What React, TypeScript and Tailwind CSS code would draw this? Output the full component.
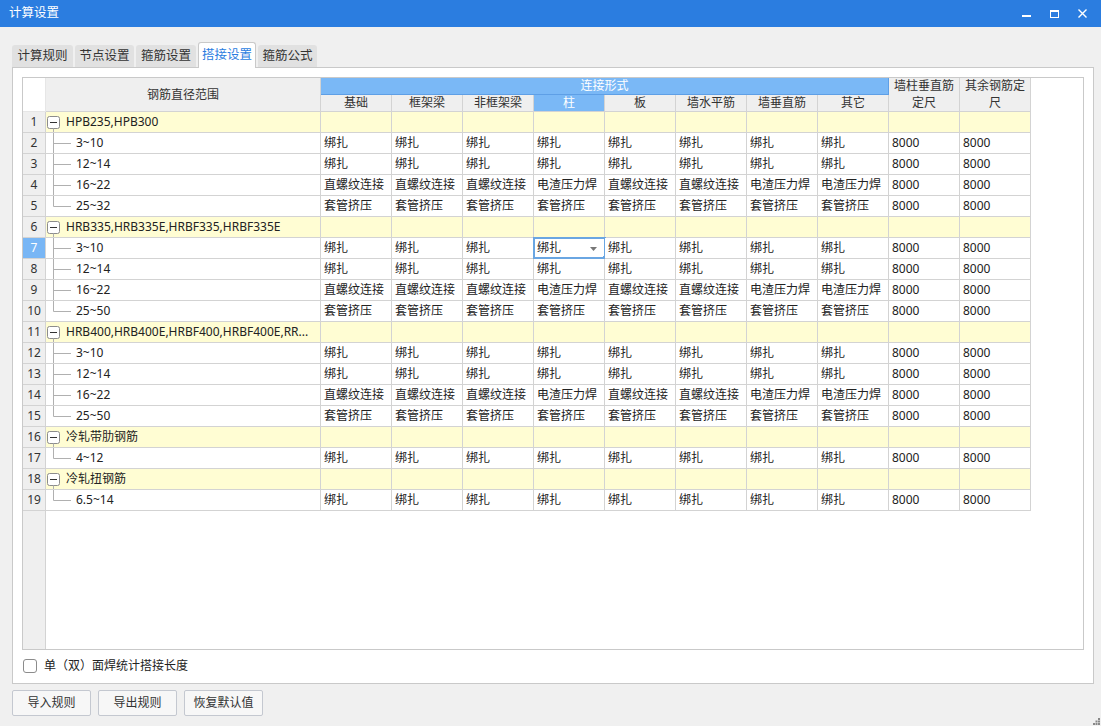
import React from "react";

const COLS = ["基础", "框架梁", "非框架梁", "柱", "板", "墙水平筋", "墙垂直筋", "其它"];

const BIND = ["绑扎", "绑扎", "绑扎", "绑扎", "绑扎", "绑扎", "绑扎", "绑扎"];
const SCREW = ["直螺纹连接", "直螺纹连接", "直螺纹连接", "电渣压力焊", "直螺纹连接", "直螺纹连接", "电渣压力焊", "电渣压力焊"];
const SLEEVE = ["套管挤压", "套管挤压", "套管挤压", "套管挤压", "套管挤压", "套管挤压", "套管挤压", "套管挤压"];

type RowDef =
  | { kind: "group"; label: string }
  | { kind: "child"; label: string; values: string[]; last?: boolean };

const ROWS: RowDef[] = [
  { kind: "group", label: "HPB235,HPB300" },
  { kind: "child", label: "3~10", values: BIND },
  { kind: "child", label: "12~14", values: BIND },
  { kind: "child", label: "16~22", values: SCREW },
  { kind: "child", label: "25~32", values: SLEEVE, last: true },
  { kind: "group", label: "HRB335,HRB335E,HRBF335,HRBF335E" },
  { kind: "child", label: "3~10", values: BIND },
  { kind: "child", label: "12~14", values: BIND },
  { kind: "child", label: "16~22", values: SCREW },
  { kind: "child", label: "25~50", values: SLEEVE, last: true },
  { kind: "group", label: "HRB400,HRB400E,HRBF400,HRBF400E,RR..." },
  { kind: "child", label: "3~10", values: BIND },
  { kind: "child", label: "12~14", values: BIND },
  { kind: "child", label: "16~22", values: SCREW },
  { kind: "child", label: "25~50", values: SLEEVE, last: true },
  { kind: "group", label: "冷轧带肋钢筋" },
  { kind: "child", label: "4~12", values: BIND, last: true },
  { kind: "group", label: "冷轧扭钢筋" },
  { kind: "child", label: "6.5~14", values: BIND, last: true },
];

const cellB = "border-r border-b border-[#d3d3d3]";

function GroupTree() {
  return (
    <svg width="20" height="20" className="shrink-0 overflow-visible">
      <rect x="1.5" y="4.5" width="12" height="12" rx="2" fill="#fff" stroke="#8c8c8c" />
      <line x1="4" y1="10.5" x2="11" y2="10.5" stroke="#333" />
      <line x1="7.5" y1="16.5" x2="7.5" y2="21" stroke="#b0b0b0" />
    </svg>
  );
}

function ChildTree({ last }: { last?: boolean }) {
  return (
    <svg width="30" height="20" className="shrink-0 overflow-visible">
      <line x1="7.5" y1="-1" x2="7.5" y2={last ? 10.5 : 21} stroke="#b0b0b0" />
      <line x1="7.5" y1="10.5" x2="25" y2="10.5" stroke="#b0b0b0" />
    </svg>
  );
}

function Row({ row, n }: { row: RowDef; n: number }) {
  const isGroup = row.kind === "group";
  const bg = isGroup ? "bg-[#fffdd3]" : "bg-white";
  const selRow = n === 7;
  return (
    <div className="grid grid-cols-[23px_275px_repeat(10,71px)] h-[21px]">
      <div
        className={`${cellB} flex items-center justify-center ${
          selRow ? "bg-[#78b6f5] text-white" : "bg-[#efefef] text-[#333]"
        }`}
      >
        {n}
      </div>
      <div className={`${cellB} ${bg} flex items-center overflow-hidden whitespace-nowrap`}>
        {row.kind === "group" ? (
          <>
            <GroupTree />
            <span className="text-[#222]">{row.label}</span>
          </>
        ) : (
          <>
            <ChildTree last={row.last} />
            <span className="text-[#222]">{row.label}</span>
          </>
        )}
      </div>
      {Array.from({ length: 8 }).map((_, i) => {
        const v = row.kind === "child" ? row.values[i] : "";
        const sel = selRow && i === 3;
        return (
          <div
            key={i}
            className={`${cellB} ${bg} relative flex items-center px-[3px] whitespace-nowrap text-[#222]`}
          >
            {v}
            {sel && (
              <div className="absolute -left-px -top-px w-[73px] h-[22px] border-2 border-[#6aa6e2] pointer-events-none">
                <svg width="7" height="4" className="absolute right-[7px] top-[8px]">
                  <polygon points="0,0 7,0 3.5,4" fill="#777" />
                </svg>
                <div className="absolute -right-[3px] -bottom-[3px] w-[4px] h-[4px] bg-[#6aa6e2]" />
              </div>
            )}
          </div>
        );
      })}
      <div className={`${cellB} ${bg} flex items-center px-[3px] text-[#222]`}>
        {isGroup ? "" : "8000"}
      </div>
      <div className={`${cellB} ${bg} flex items-center px-[3px] text-[#222]`}>
        {isGroup ? "" : "8000"}
      </div>
    </div>
  );
}

export default function App() {
  return (
    <div className="w-[1101px] h-[726px] bg-[#f0f0f0] flex flex-col overflow-hidden font-['Noto_Sans','Noto_Sans_CJK_SC',sans-serif] text-[12px] leading-none text-[#333]">
      {/* Title bar */}
      <div className="h-[27px] bg-[#2b7de0] flex items-center justify-between pl-[9px] pr-[5px] shrink-0">
        <span className="text-white text-[12.5px]">计算设置</span>
        <div className="flex items-center h-full">
          <div className="w-[28px] h-full flex items-center justify-center">
            <svg width="9" height="9" viewBox="0 0 9 9">
              <rect x="0" y="6" width="9" height="2" fill="#fff" />
            </svg>
          </div>
          <div className="w-[28px] h-full flex items-center justify-center">
            <svg width="9" height="8" viewBox="0 0 9 8">
              <rect x="0.5" y="0.5" width="8" height="7" fill="none" stroke="#fff" />
              <rect x="0" y="0" width="9" height="2" fill="#fff" />
            </svg>
          </div>
          <div className="w-[28px] h-full flex items-center justify-center">
            <svg width="9" height="9" viewBox="0 0 9 9">
              <path d="M0.5 0.5 L8.5 8.5 M8.5 0.5 L0.5 8.5" stroke="#fff" strokeWidth="1.4" />
            </svg>
          </div>
        </div>
      </div>

      <div className="flex flex-col pl-[12px] pr-[7px]">
        {/* Tabs */}
        <div className="mt-[15px] h-[25px] flex items-end gap-[2px]">
          {[
            ["计算规则", "w-[61px]"],
            ["节点设置", "w-[59px]"],
            ["箍筋设置", "w-[60px]"],
            ["搭接设置", "w-[58px]"],
            ["箍筋公式", "w-[59px]"],
          ].map(([t, w], i) =>
            i === 3 ? (
              <div
                key={t}
                className={`${w} h-[26px] -mb-px relative z-10 bg-white border border-b-0 border-[#c9c9c9] rounded-t-[3px] flex items-center justify-center text-[12.5px] text-[#2b7de0]`}
              >
                {t}
              </div>
            ) : (
              <div
                key={t}
                className={`${w} h-[22px] bg-[#e1e1e1] rounded-t-[3px] flex items-center justify-center text-[12.5px] text-[#333]`}
              >
                {t}
              </div>
            )
          )}
        </div>

        {/* Panel */}
        <div className="w-[1082px] h-[617px] bg-white border border-[#c9c9c9] pt-[9px] px-[9px] flex flex-col">
          {/* Grid */}
          <div className="w-[1062px] h-[573px] border border-[#c9c9c9] flex flex-col bg-white">
            {/* Header */}
            <div className="grid grid-cols-[23px_275px_repeat(10,71px)_1fr] grid-rows-[17px_17px] text-[#333]">
              <div className="row-span-2 bg-white border-r border-b border-[#e6e6e6]" />
              <div className={`row-span-2 ${cellB} bg-[#efefef] flex items-center justify-center`}>
                钢筋直径范围
              </div>
              <div className="col-span-8 bg-[#7ab8f6] border-r border-b border-[#5e9fe6] flex items-center justify-center text-white">
                连接形式
              </div>
              <div className={`row-span-2 ${cellB} bg-[#efefef] flex flex-col items-center justify-center gap-[5px]`}>
                <span>墙柱垂直筋</span>
                <span>定尺</span>
              </div>
              <div className={`row-span-2 ${cellB} bg-[#efefef] flex flex-col items-center justify-center gap-[5px]`}>
                <span>其余钢筋定</span>
                <span>尺</span>
              </div>
              <div className="row-span-2 bg-white" />
              {COLS.map((c, i) => (
                <div
                  key={c}
                  className={`${cellB} flex items-center justify-center ${
                    i === 3 ? "bg-[#7ab8f6] text-white" : "bg-[#efefef]"
                  }`}
                >
                  {c}
                </div>
              ))}
            </div>
            {/* Body */}
            {ROWS.map((r, i) => (
              <Row key={i} row={r} n={i + 1} />
            ))}
            <div className="flex-1 flex">
              <div className="w-[23px] bg-[#efefef] border-r border-[#d3d3d3]" />
              <div className="flex-1 bg-white" />
            </div>
          </div>
          {/* Checkbox row */}
          <div className="h-[32px] flex items-center pl-[1px]">
            <div className="w-[14px] h-[14px] border border-[#8c8c8c] rounded-[3px] bg-white" />
            <span className="ml-[7px] text-[#222]">单（双）面焊统计搭接长度</span>
          </div>
        </div>

        {/* Buttons */}
        <div className="mt-[6px] flex items-start">
          <div className="flex gap-[7px]">
            {[
              ["导入规则", "w-[79px]"],
              ["导出规则", "w-[79px]"],
              ["恢复默认值", "w-[79px]"],
            ].map(([t, w]) => (
              <div
                key={t}
                className={`${w} h-[26px] bg-[#f7f7f7] border border-[#c4c8d0] rounded-[2px] flex items-center justify-center text-[#333]`}
              >
                {t}
              </div>
            ))}
          </div>
        </div>
      </div>
      <div className="flex-1 flex justify-end items-end pr-[1px] pb-[1px]">
        <svg width="7" height="7" viewBox="0 0 7 7">
          <rect x="5" y="0" width="2" height="2" fill="#888" />
          <rect x="2.5" y="2.5" width="2" height="2" fill="#888" />
          <rect x="5" y="2.5" width="2" height="2" fill="#888" />
          <rect x="0" y="5" width="2" height="2" fill="#888" />
          <rect x="2.5" y="5" width="2" height="2" fill="#888" />
          <rect x="5" y="5" width="2" height="2" fill="#888" />
        </svg>
      </div>
    </div>
  );
}
